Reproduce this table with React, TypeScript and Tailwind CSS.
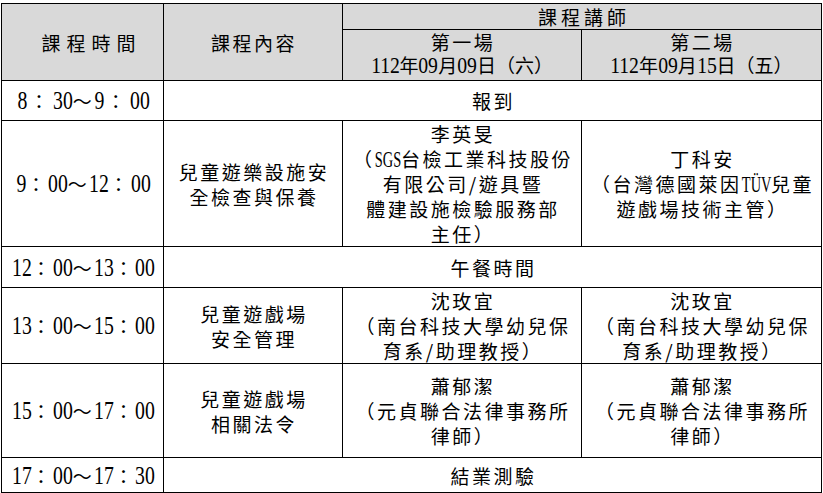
import React from "react";

const DIG =
  "inline-block font-['Liberation_Serif',serif] text-[26px] leading-[20px] tracking-normal scale-x-[0.76]";
const DM: Record<number, string> = {
  1: "-mx-[1.56px]",
  2: "-mx-[3.12px]",
  3: "-mx-[4.68px]",
};

function N({ t }: { t: string }) {
  return <span className={`${DIG} ${DM[t.length]}`}>{t}</span>;
}

const DIGS =
  "inline-block font-['Liberation_Serif',serif] text-[24px] leading-[18px] tracking-normal scale-x-[0.82]";
const DMS: Record<number, string> = {
  2: "-mx-[2.16px]",
  3: "-mx-[3.24px]",
};

function S({ t }: { t: string }) {
  return <span className={`${DIGS} ${DMS[t.length]}`}>{t}</span>;
}

const LAT =
  "inline-block font-['Liberation_Serif',serif] text-[24px] leading-[20px] tracking-normal scale-x-[0.6]";

function SGS() {
  return <span className={`${LAT} -mx-[8.8px]`}>SGS</span>;
}
function TUV() {
  return <span className={`${LAT} -mx-[9.86px]`}>TÜV</span>;
}

const cell = "border border-black p-0 text-center align-middle";

function Time({ a, b, c, d, wide }: { a: string; b: string; c: string; d: string; wide?: boolean }) {
  const colon = wide ? "mx-[2px]" : "";
  return (
    <div className="whitespace-nowrap tracking-[2.5px] pl-[2px]">
      <N t={a} />
      <span className={colon}>：</span>
      <N t={b} />
      ～
      <N t={c} />
      <span className={colon}>：</span>
      <N t={d} />
    </div>
  );
}

function Lines({ children }: { children: React.ReactNode }) {
  return <div className="whitespace-nowrap tracking-[2.5px] pl-[2px]">{children}</div>;
}

export default function App() {
  return (
    <div className="bg-white w-[823px] h-[493px] pt-[3px] pl-[1px] font-['Noto_Sans_CJK_TC',sans-serif] text-black text-[19px] leading-[25px]">
      <table className="table-fixed border-collapse w-[820px]">
        <colgroup>
          <col className="w-[162px]" />
          <col className="w-[179px]" />
          <col className="w-[239px]" />
          <col className="w-[240px]" />
        </colgroup>
        <tbody>
          <tr className="h-[26px] bg-[#d9d9d9]">
            <td rowSpan={2} className={cell}>
              <div className="tracking-[6px] pl-[18px]">課程時間</div>
            </td>
            <td rowSpan={2} className={cell}>
              <div className="tracking-[2.5px] pl-[2px]">課程內容</div>
            </td>
            <td colSpan={2} className={cell}>
              <div className="tracking-[4px] pl-[4px] leading-[24px]">課程講師</div>
            </td>
          </tr>
          <tr className="h-[51px] bg-[#d9d9d9]">
            <td className={cell}>
              <div className="whitespace-nowrap pb-[3px]">
                <div className="tracking-[2.5px] pl-[2px] leading-[22px]">第一場</div>
                <div className="leading-[24px]">
                  <S t="112" />年<S t="09" />月<S t="09" />日（六）
                </div>
              </div>
            </td>
            <td className={cell}>
              <div className="whitespace-nowrap pb-[3px]">
                <div className="tracking-[2.5px] pl-[2px] leading-[22px]">第二場</div>
                <div className="leading-[24px]">
                  <S t="112" />年<S t="09" />月<S t="15" />日（五）
                </div>
              </div>
            </td>
          </tr>

          <tr className="h-[40px]">
            <td className={cell}>
              <Time a="8" b="30" c="9" d="00" wide />
            </td>
            <td colSpan={3} className={cell}>
              <Lines>報到</Lines>
            </td>
          </tr>

          <tr className="h-[125px]">
            <td className={cell}>
              <Time a="9" b="00" c="12" d="00" />
            </td>
            <td className={cell}>
              <Lines>
                <div>兒童遊樂設施安</div>
                <div>全檢查與保養</div>
              </Lines>
            </td>
            <td className={cell}>
              <Lines>
                <div>李英旻</div>
                <div>
                  （<SGS />台檢工業科技股份
                </div>
                <div>有限公司/遊具暨</div>
                <div>體建設施檢驗服務部</div>
                <div>主任）</div>
              </Lines>
            </td>
            <td className={cell}>
              <Lines>
                <div>丁科安</div>
                <div>
                  （台灣德國萊因<TUV />兒童
                </div>
                <div>遊戲場技術主管）</div>
              </Lines>
            </td>
          </tr>

          <tr className="h-[41px]">
            <td className={cell}>
              <Time a="12" b="00" c="13" d="00" />
            </td>
            <td colSpan={3} className={cell}>
              <Lines>午餐時間</Lines>
            </td>
          </tr>

          <tr className="h-[76px]">
            <td className={cell}>
              <Time a="13" b="00" c="15" d="00" />
            </td>
            <td className={cell}>
              <Lines>
                <div>兒童遊戲場</div>
                <div>安全管理</div>
              </Lines>
            </td>
            <td className={cell}>
              <Lines>
                <div>沈玫宜</div>
                <div>（南台科技大學幼兒保</div>
                <div>育系/助理教授）</div>
              </Lines>
            </td>
            <td className={cell}>
              <Lines>
                <div>沈玫宜</div>
                <div>（南台科技大學幼兒保</div>
                <div>育系/助理教授）</div>
              </Lines>
            </td>
          </tr>

          <tr className="h-[94px]">
            <td className={cell}>
              <Time a="15" b="00" c="17" d="00" />
            </td>
            <td className={cell}>
              <Lines>
                <div>兒童遊戲場</div>
                <div>相關法令</div>
              </Lines>
            </td>
            <td className={cell}>
              <Lines>
                <div>蕭郁潔</div>
                <div>（元貞聯合法律事務所</div>
                <div>律師）</div>
              </Lines>
            </td>
            <td className={cell}>
              <Lines>
                <div>蕭郁潔</div>
                <div>（元貞聯合法律事務所</div>
                <div>律師）</div>
              </Lines>
            </td>
          </tr>

          <tr className="h-[35px]">
            <td className={cell}>
              <Time a="17" b="00" c="17" d="30" />
            </td>
            <td colSpan={3} className={cell}>
              <Lines>結業測驗</Lines>
            </td>
          </tr>
        </tbody>
      </table>
    </div>
  );
}
